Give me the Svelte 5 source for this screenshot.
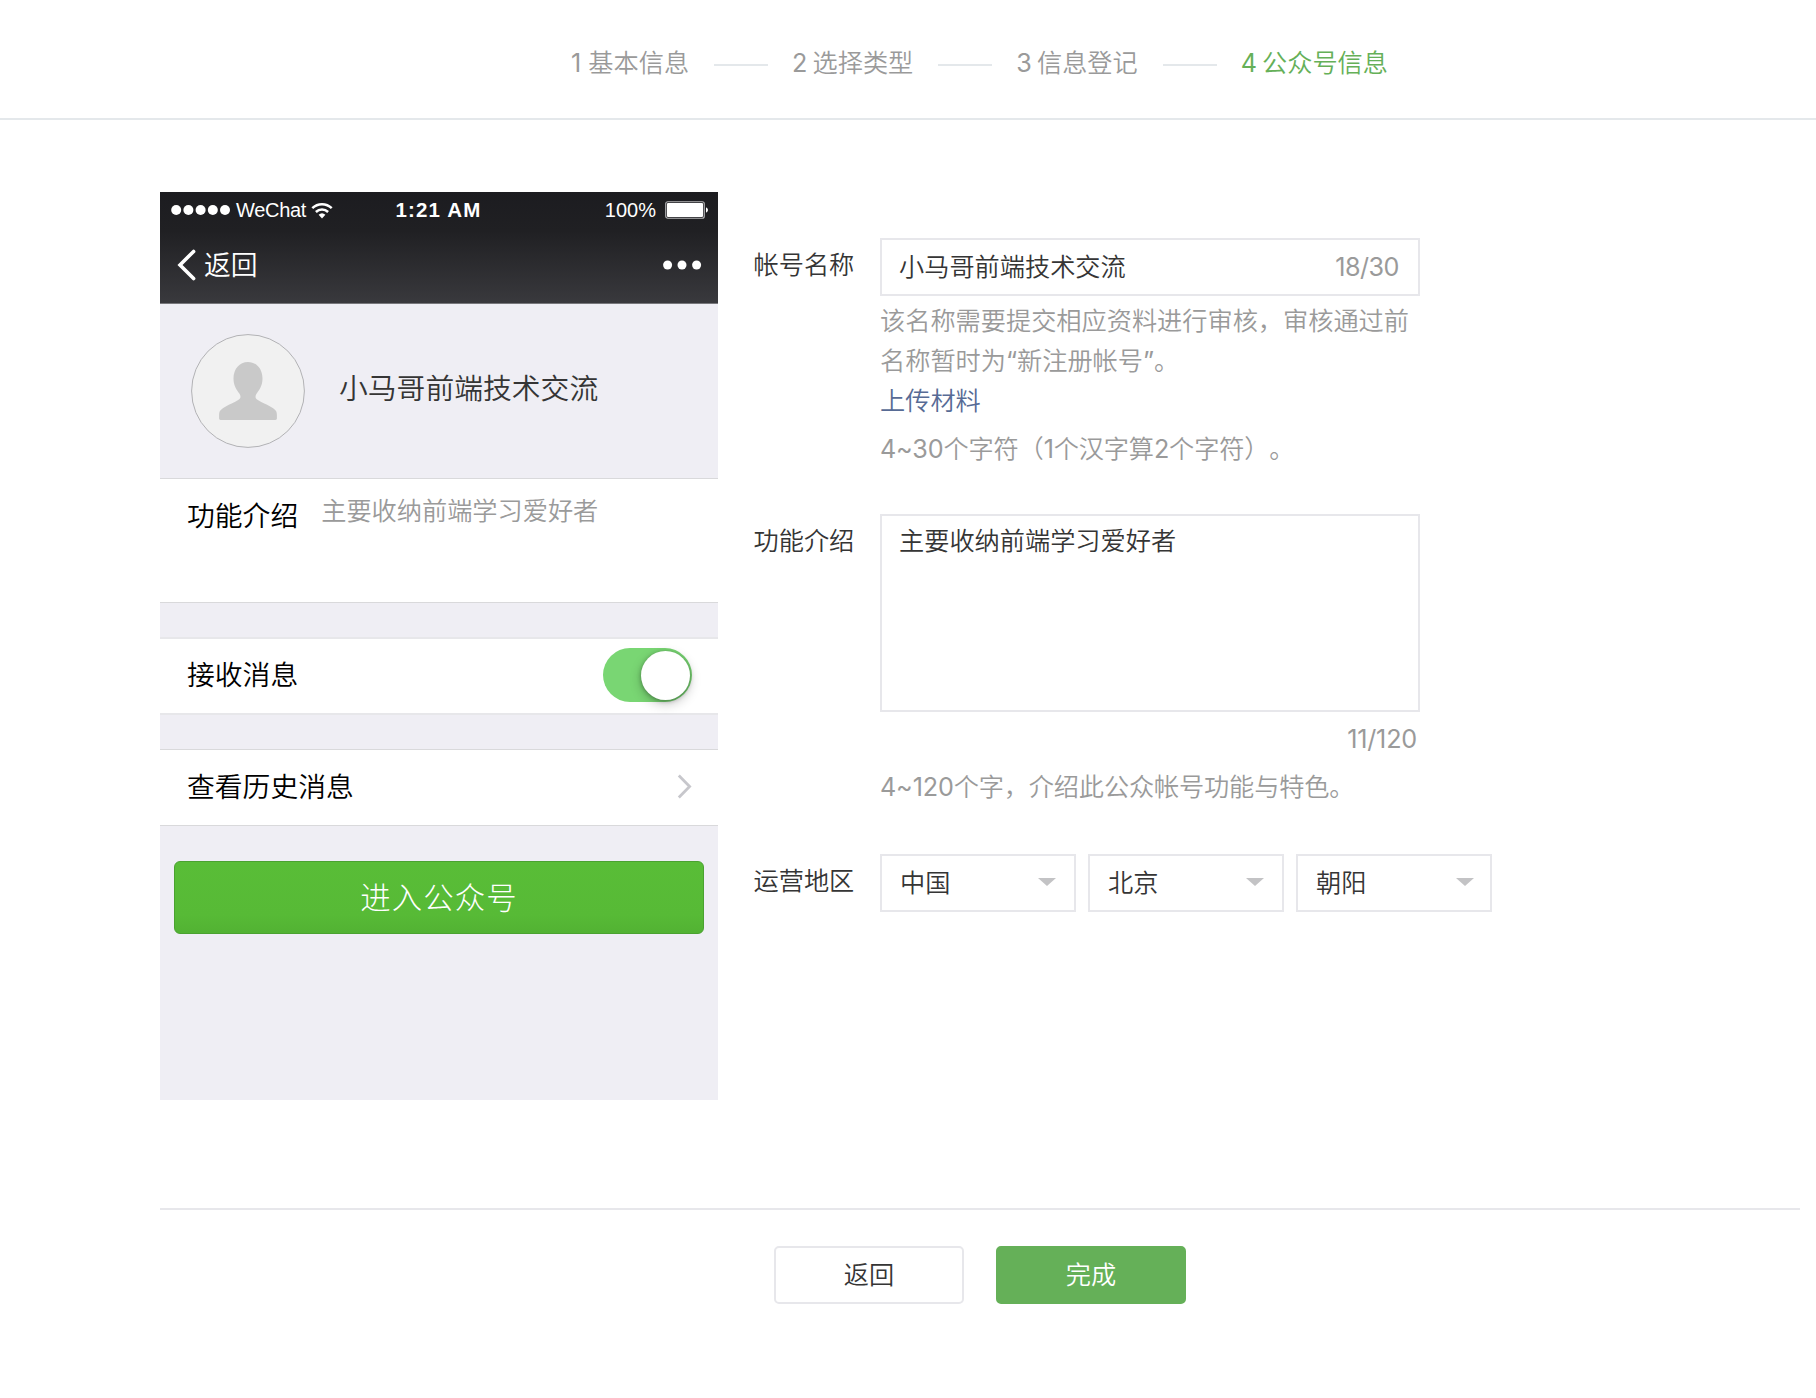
<script lang="ts">
  const steps = ['基本信息', '选择类型', '信息登记', '公众号信息'];
  const current = 3;

  let name = $state('小马哥前端技术交流');
  let intro = $state('主要收纳前端学习爱好者');
  let receive = $state(true);

  const regions = ['中国', '北京', '朝阳'];

  // a Chinese character counts as two
  const nameCount = $derived(
    [...name].reduce((sum, ch) => sum + (ch.charCodeAt(0) > 255 ? 2 : 1), 0)
  );
</script>

<header class="steps">
  {#each steps as step, i}
    {#if i > 0}
      <i class="step-line"></i>
    {/if}
    <span class="step" class:active={i === current}>{i + 1} {step}</span>
  {/each}
</header>

<main>
  <section class="phone">
    <div class="phone-head">
      <div class="status">
        <div class="carrier">
          <svg class="signal" width="60" height="12" viewBox="0 0 60 12" fill="#fff">
            {#each [0, 1, 2, 3, 4] as n}
              <circle cx={5.2 + n * 12.2} cy="6" r="5" />
            {/each}
          </svg>
          <span class="network">WeChat</span>
          <svg class="wifi" width="22" height="17" viewBox="0 0 22 17" fill="none" stroke="#fff" stroke-width="2.5">
            <path d="M1.3 6.2a14 14 0 0 1 19.4 0" />
            <path d="M4.9 10a8.8 8.8 0 0 1 12.2 0" />
            <path d="M7.6 12.8a5 5 0 0 1 6.8 0L11 16.5z" fill="#fff" stroke="none" />
          </svg>
        </div>
        <span class="time">1:21 AM</span>
        <div class="power">
          <span>100%</span>
          <svg width="43" height="18" viewBox="0 0 43 18">
            <rect x="0.75" y="0.75" width="38.5" height="16.5" rx="2" fill="none" stroke="#b5b5b7" stroke-width="1.2" />
            <rect x="2" y="2" width="36" height="14" rx="1" fill="#fff" />
            <path d="M41 6.2q2 1 2 2.8t-2 2.8z" fill="#fff" />
          </svg>
        </div>
      </div>
      <div class="nav">
        <div class="back">
          <svg width="20" height="32" viewBox="0 0 20 32" fill="none" stroke="#fff" stroke-width="3.6" stroke-linecap="round">
            <path d="M17.6 2.4 4 16l13.6 13.6" />
          </svg>
          <span>返回</span>
        </div>
        <svg width="40" height="10" viewBox="0 0 40 10" fill="#fff">
          <circle cx="5.6" cy="5" r="4.5" />
          <circle cx="20" cy="5" r="4.5" />
          <circle cx="34.6" cy="5" r="4.5" />
        </svg>
      </div>
    </div>

    <div class="profile">
      <svg class="avatar" width="114" height="114" viewBox="0 0 114 114">
        <circle cx="57" cy="57" r="56.4" fill="#f1f1f1" stroke="#b2b2b5" />
        <path
          fill="#c9c9c9"
          d="M57 28c8.5 0 14.5 7 14.5 16.500 0 8-3.600 11.500-6 15.300-1.600 2.600-1.300 4.600 1.300 6.200 3 2 10.700 5 15.700 8.600 2.700 1.900 3.400 3.600 3.400 6.400v3.600q0 1.400-1.400 1.400h-55q-1.400 0-1.400-1.400V81c0-2.800.7-4.500 3.400-6.400 5-3.600 12.700-6.600 15.700-8.600 2.600-1.600 2.900-3.600 1.300-6.200-2.400-3.800-6-7.300-6-15.300C42.500 35 48.500 28 57 28z"
        />
      </svg>
      <span class="nick">{name}</span>
    </div>

    <div class="row intro">
      <span class="row-label">功能介绍</span>
      <span class="row-text">{intro}</span>
    </div>

    <div class="row receive">
      <span class="row-label">接收消息</span>
      <button class="switch" class:on={receive} aria-label="接收消息" onclick={() => (receive = !receive)}>
        <i></i>
      </button>
    </div>

    <div class="row history">
      <span class="row-label">查看历史消息</span>
      <svg width="15" height="25" viewBox="0 0 15 25" fill="none" stroke="#c7c7cc" stroke-width="2.8">
        <path d="M1.8 1.6 12.6 12.5 1.8 23.4" />
      </svg>
    </div>

    <div class="enter">进入公众号</div>
  </section>

  <form class="form">
    <div class="field name">
      <label for="name">帐号名称</label>
      <div class="control">
        <div class="input-box">
          <input id="name" bind:value={name} />
          <span class="count">{nameCount}/30</span>
        </div>
        <p class="tips">该名称需要提交相应资料进行审核，审核通过前<br />名称暂时为“新注册帐号”。</p>
        <p class="tips"><a href="#upload">上传材料</a></p>
        <p class="tips limit">4~30个字符（1个汉字算2个字符）。</p>
      </div>
    </div>

    <div class="field desc">
      <label for="intro">功能介绍</label>
      <div class="control">
        <textarea id="intro" bind:value={intro}></textarea>
        <p class="tips total">{intro.length}/120</p>
        <p class="tips limit">4~120个字，介绍此公众帐号功能与特色。</p>
      </div>
    </div>

    <div class="field region">
      <span class="label">运营地区</span>
      <div class="selects">
        {#each regions as region}
          <div class="select">
            <span>{region}</span>
            <i class="arrow"></i>
          </div>
        {/each}
      </div>
    </div>
  </form>
</main>

<footer>
  <button class="btn">返回</button>
  <button class="btn primary">完成</button>
</footer>

<style>
  :global(body) {
    margin: 0;
    background: #fff;
    color: #353535;
    font-family: Inter, 'Noto Sans CJK SC DemiLight', 'Noto Sans CJK SC', sans-serif;
    font-size: 25.2px;
    line-height: 40px;
    text-spacing-trim: space-all;
  }

  input,
  textarea,
  button {
    font: inherit;
    color: inherit;
    border-radius: 0;
    outline: none;
    box-sizing: border-box;
  }

  p { margin: 0; }

  .steps {
    display: flex;
    align-items: center;
    box-sizing: border-box;
    height: 120px;
    padding: 12px 0 0 571px;
    border-bottom: 2px solid #e4e8eb;
    color: #9a9a9a;
  }

  .step {
    white-space: nowrap;
    margin-top: -4px;
    word-spacing: -2px;
  }
  .step:first-child { word-spacing: 0; }
  .step.active { color: #65b058; }

  .step-line {
    width: 54px;
    height: 2px;
    margin: 0 24px 0 25px;
    background: #e4e8eb;
  }

  main {
    display: flex;
    align-items: flex-start;
    padding: 72px 0 0 160px;
  }

  .phone {
    flex: none;
    width: 558px;
    height: 908px;
    background: #efeef4;
    font-weight: 350;
  }

  .phone-head {
    box-sizing: border-box;
    height: 112px;
    border-bottom: 1px solid #77777b;
    background: linear-gradient(#1c1c20, #202023 35%, #39393d);
    color: #fff;
  }

  .status {
    display: grid;
    grid-template-columns: 1fr auto 1fr;
    align-items: center;
    height: 36px;
    padding: 0 10px 0 11px;
    font-family: 'Liberation Sans', Arial, sans-serif;
    font-size: 20px;
    line-height: 36px;
  }

  .carrier,
  .power {
    display: flex;
    align-items: center;
  }

  .power {
    justify-content: flex-end;
    gap: 9px;
  }

  .network { margin: 0 5px; letter-spacing: -0.3px; }
  .time {
    margin-right: 2px;
    font-size: 20.5px;
    font-weight: 700;
    letter-spacing: 1.2px;
  }

  .nav {
    display: flex;
    align-items: center;
    justify-content: space-between;
    padding: 0 16px;
    height: 74px;
    font-size: 26.8px;
  }

  .back {
    display: flex;
    align-items: center;
    gap: 8px;
  }

  .profile {
    display: flex;
    align-items: center;
    box-sizing: border-box;
    height: 175px;
    padding-left: 31px;
    border-bottom: 1px solid #d9d9db;
  }

  .nick {
    margin: -5px 0 0 34px;
    font-size: 28.8px;
  }

  .row {
    display: flex;
    align-items: center;
    justify-content: space-between;
    box-sizing: border-box;
    padding: 0 26px 0 27px;
    background: #fff;
    border-bottom: 1px solid #d9d9db;
  }

  .row-label {
    color: #000;
    font-size: 27.8px;
  }

  .row.intro {
    align-items: flex-start;
    justify-content: flex-start;
    gap: 23px;
    height: 124px;
    padding-top: 17px;
  }

  .row-text {
    margin-top: -5px;
    color: #9a9a9a;
  }

  .row.receive {
    height: 78px;
    margin-top: 34px;
    padding-bottom: 2px;
    border-top: 2px solid #e7e7ea;
    border-bottom: 2px solid #e7e7ea;
  }

  .row.history {
    height: 77px;
    margin-top: 34px;
    padding-bottom: 2px;
    border-top: 1px solid #d9d9db;
  }

  .switch {
    display: flex;
    align-items: center;
    width: 89px;
    height: 54px;
    padding: 0 2.5px;
    border: 0;
    border-radius: 27px;
    background: #ddd;
    cursor: pointer;
  }

  .switch i {
    width: 49px;
    height: 49px;
    border-radius: 50%;
    background: #fff;
    box-shadow: 0 4px 12px rgba(0, 0, 0, 0.22), 0 1px 4px rgba(0, 0, 0, 0.3);
  }

  .switch.on {
    justify-content: flex-end;
    background: #79d673;
  }

  .enter {
    box-sizing: border-box;
    height: 73px;
    margin: 35px 14px 0;
    border: 1px solid #4aa230;
    border-radius: 6px;
    background: linear-gradient(#59bd37, #57ba36 75%, #52b233);
    color: #fff;
    font-family: 'Noto Sans CJK SC', sans-serif;
    font-size: 30.4px;
    font-weight: 300;
    letter-spacing: 1.1px;
    line-height: 68px;
    text-align: center;
  }

  .form {
    padding: 46px 0 0 35.5px;
  }

  .field {
    display: flex;
    align-items: flex-start;
  }

  .field label,
  .field .label {
    width: 126.5px;
    padding-top: 7px;
  }

  .control { width: 540px; }

  .input-box {
    display: flex;
    align-items: center;
    box-sizing: border-box;
    height: 58px;
    padding: 0 19px 0 17px;
    border: 2px solid #e7e7eb;
  }

  .input-box input {
    flex: 1;
    min-width: 0;
    padding: 0;
    border: 0;
    background: none;
  }

  .count,
  .tips {
    color: #9a9a9a;
  }

  .count { letter-spacing: -0.5px; }
  .total { letter-spacing: -0.2px; }

  .tips {
    white-space: nowrap;
  }
  .tips:first-of-type { margin-top: 5px; }
  .tips.limit {
    margin-top: 8px;
    letter-spacing: -0.15px;
  }
  .tips a { color: #576b95; text-decoration: none; }

  .desc { margin-top: 45px; }

  textarea {
    display: block;
    width: 540px;
    height: 198px;
    padding: 5px 17px;
    border: 2px solid #e7e7eb;
    resize: none;
  }

  .tips.total {
    margin: 7px 3px 0 0;
    text-align: right;
  }

  .region { margin-top: 47px; }

  .selects {
    display: flex;
    gap: 12px;
  }

  .select {
    display: flex;
    align-items: center;
    justify-content: space-between;
    box-sizing: border-box;
    width: 196px;
    height: 58px;
    padding: 0 18px;
    border: 2px solid #e7e7eb;
  }
  .select:last-child { padding-right: 16px; }

  .arrow {
    border: 9px solid transparent;
    border-top: 8px solid #c3c3c5;
    border-bottom: 0;
    margin-top: -3px;
  }

  footer {
    display: flex;
    justify-content: center;
    gap: 32px;
    width: 1640px;
    margin: 108px 0 0 160px;
    padding-top: 36px;
    border-top: 2px solid #e7e7eb;
  }

  .btn {
    width: 190px;
    height: 58px;
    padding: 0;
    border: 2px solid #e7e7eb;
    border-radius: 5px;
    background: #fff;
    cursor: pointer;
  }

  .btn.primary {
    border-color: #65b058;
    background: #65b058;
    color: #fff;
  }
</style>
